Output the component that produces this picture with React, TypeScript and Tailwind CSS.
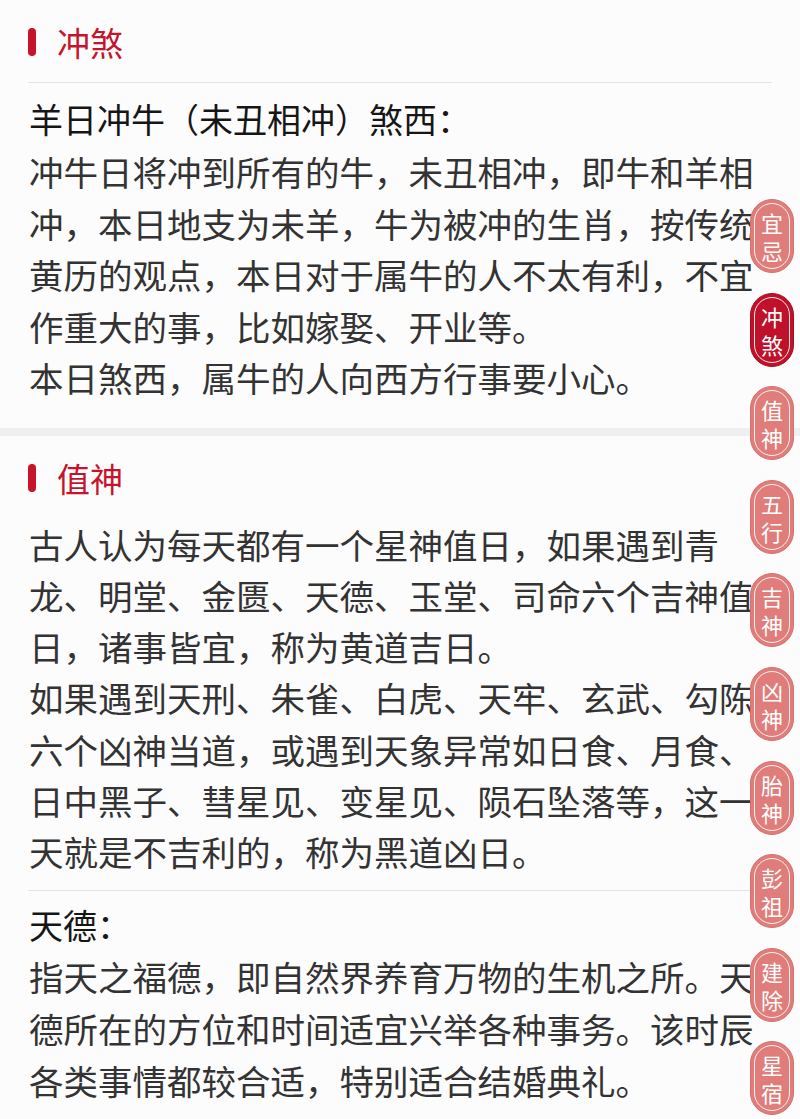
import React from "react";

const navItems = [
  ["宜", "忌"],
  ["冲", "煞"],
  ["值", "神"],
  ["五", "行"],
  ["吉", "神"],
  ["凶", "神"],
  ["胎", "神"],
  ["彭", "祖"],
  ["建", "除"],
  ["星", "宿"],
];

function Heading({ title }: { title: string }) {
  return (
    <div className="flex items-center gap-[21px] px-[28px] pt-[22px] pb-[20px]">
      <span className="block w-[8px] h-[28px] rounded-full bg-[#c5142c]" />
      <span className="text-[33px] leading-[40px] text-[#c5142c]">{title}</span>
    </div>
  );
}

export default function App() {
  return (
    <div
      className="relative w-[800px] h-[1119px] overflow-hidden bg-[#fdfcfd]"
      style={{ fontFamily: '"Noto Sans CJK SC", "Noto Sans", sans-serif' }}
    >
      {/* Section 1 */}
      <section>
        <Heading title="冲煞" />
        <div className="mx-[28px] h-[1px] bg-[#e4e4e6]" />
        <div className="px-[29px]">
          <div className="pt-[10px] text-[34px] leading-[51px] text-[#161616]">
            羊日冲牛（未丑相冲）煞西：
          </div>
          <div className="mt-[2px] text-[34.5px] leading-[51.5px] text-[#333333]">
            <p>冲牛日将冲到所有的牛，未丑相冲，即牛和羊相冲，本日地支为未羊，牛为被冲的生肖，按传统黄历的观点，本日对于属牛的人不太有利，不宜作重大的事，比如嫁娶、开业等。</p>
            <p>本日煞西，属牛的人向西方行事要小心。</p>
          </div>
        </div>
        <div className="h-[24px]" />
      </section>

      <div className="h-[8px] bg-[#efeef1]" />

      {/* Section 2 */}
      <section>
        <Heading title="值神" />
        <div className="px-[29px] pt-[1px]">
          <div className="text-[34.5px] leading-[51.3px] text-[#333333]">
            <p>古人认为每天都有一个星神值日，如果遇到青龙、明堂、金匮、天德、玉堂、司命六个吉神值日，诸事皆宜，称为黄道吉日。</p>
            <p>如果遇到天刑、朱雀、白虎、天牢、玄武、勾陈六个凶神当道，或遇到天象异常如日食、月食、日中黑子、彗星见、变星见、陨石坠落等，这一天就是不吉利的，称为黑道凶日。</p>
          </div>
        </div>
        <div className="mx-[28px] mt-[12px] h-[1px] bg-[#e4e4e6]" />
        <div className="px-[29px]">
          <div className="pt-[8px] text-[34px] leading-[51px] text-[#161616]">天德：</div>
          <div className="text-[34.5px] leading-[52px] text-[#333333]">
            <p>指天之福德，即自然界养育万物的生机之所。天德所在的方位和时间适宜兴举各种事务。该时辰各类事情都较合适，特别适合结婚典礼。</p>
          </div>
        </div>
      </section>

      {/* Floating side nav */}
      <nav className="absolute right-[6px] top-[199px] flex flex-col gap-[19.6px]">
        {navItems.map(([a, b], i) => {
          const active = i === 1;
          return (
            <div
              key={i}
              className={
                active
                  ? "w-[44px] h-[74px] rounded-full p-[3px] bg-[#c0112b] border border-[#a80d24]"
                  : "w-[44px] h-[74px] rounded-full p-[3px] bg-[#e07d7a] border border-[#d4706d]"
              }
            >
              <div className="h-full rounded-full border-[1.5px] border-white/90 flex items-center justify-center text-white text-[22px] leading-[28px] text-center">
                <span>
                  {a}
                  <br />
                  {b}
                </span>
              </div>
            </div>
          );
        })}
      </nav>
    </div>
  );
}
